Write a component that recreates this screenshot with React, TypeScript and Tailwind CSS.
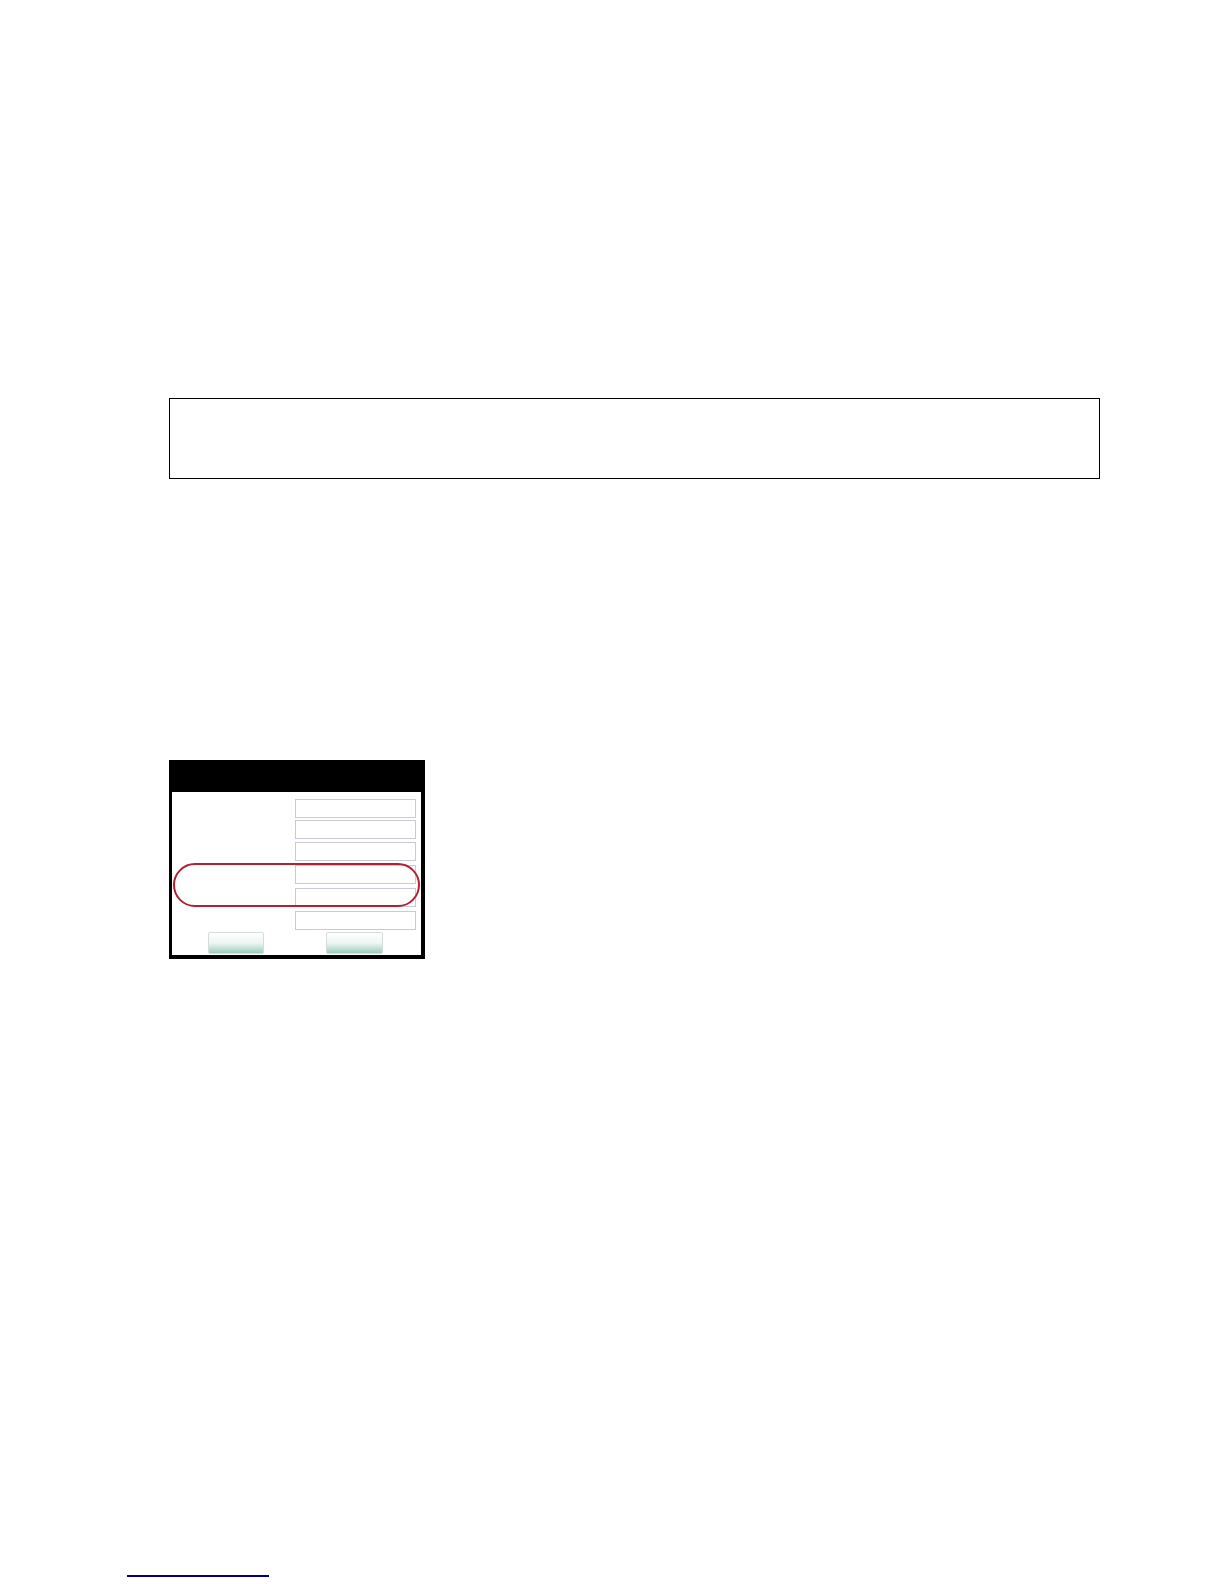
export default function App() {
  const fields = ['mt-[7px]', 'mt-[2px]', 'mt-[3px]', 'mt-[4px]', 'mt-[4px]', 'mt-[4px]'];

  return (
    <div className="min-h-[1584px] w-[1224px] bg-white font-['Liberation_Sans',Arial,sans-serif]">
      {/* empty note box */}
      <div className="pt-[398px] pl-[169px]">
        <div className="h-[81px] w-[931px] border-[1.5px] border-black" />
      </div>

      {/* dialog screenshot */}
      <div className="pl-[169px] pt-[281px]">
        <div className="relative w-[256px] border-[3px] border-r-4 border-b-4 border-black bg-black">
          <div className="h-[29px]" />
          <div className="flex h-[163px] flex-col bg-white">
            <div className="flex flex-col items-end pr-[5px]">
              {fields.map((m, i) => (
                <div key={i} className={`${m} h-[19px] w-[121px] border border-[#c9cad6] bg-white`} />
              ))}
            </div>
            <div className="mt-[2px] flex gap-[62px] pl-[36px]">
              <div className="h-[22px] w-[56px] rounded-[2px] border border-[#d5dcda] bg-gradient-to-b from-white via-[#eef6f3] to-[#9ccdbd]" />
              <div className="h-[22px] w-[57px] rounded-[2px] border border-[#d5dcda] bg-gradient-to-b from-white via-[#eef6f3] to-[#9ccdbd]" />
            </div>
          </div>
          {/* highlight annotation */}
          <div className="absolute left-[1px] top-[100px] h-[44px] w-[247px] rounded-full border-[2.5px] border-[#b3202e]" />
        </div>
      </div>

      {/* footnote link rule */}
      <div className="pl-[127px] pt-[616px]">
        <div className="h-[1.5px] w-[142px] bg-[#000080]" />
      </div>
    </div>
  );
}
